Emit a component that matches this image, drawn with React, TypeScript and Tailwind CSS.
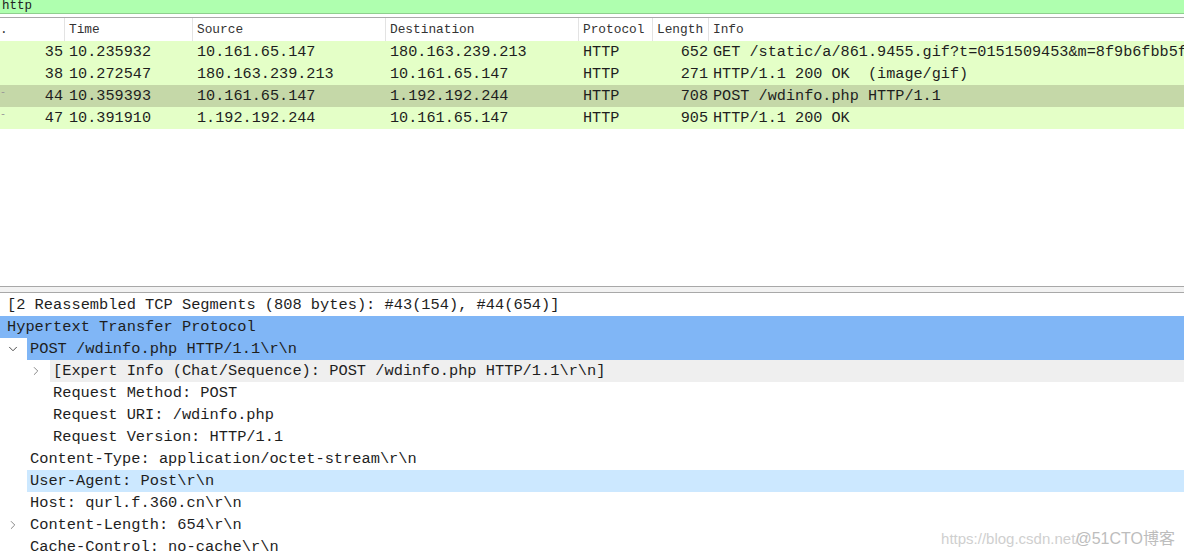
import { ChevronDown, ChevronRight } from 'lucide-react';

const mono = { fontFamily: '"Liberation Mono", "DejaVu Sans Mono", monospace' };

interface Packet {
  no: number;
  time: string;
  src: string;
  dst: string;
  proto: string;
  len: number;
  info: string;
  selected?: boolean;
  mark?: boolean;
}

const packets: Packet[] = [
  { no: 35, time: '10.235932', src: '10.161.65.147', dst: '180.163.239.213', proto: 'HTTP', len: 652, info: 'GET /static/a/861.9455.gif?t=0151509453&m=8f9b6fbb5f9d' },
  { no: 38, time: '10.272547', src: '180.163.239.213', dst: '10.161.65.147', proto: 'HTTP', len: 271, info: 'HTTP/1.1 200 OK  (image/gif)' },
  { no: 44, time: '10.359393', src: '10.161.65.147', dst: '1.192.192.244', proto: 'HTTP', len: 708, info: 'POST /wdinfo.php HTTP/1.1', selected: true, mark: true },
  { no: 47, time: '10.391910', src: '1.192.192.244', dst: '10.161.65.147', proto: 'HTTP', len: 905, info: 'HTTP/1.1 200 OK', mark: true },
];

type Tree = { text: string; level: number; open?: boolean; closed?: boolean; bg?: string };

const tree: Tree[] = [
  { text: '[2 Reassembled TCP Segments (808 bytes): #43(154), #44(654)]', level: 0 },
  { text: 'Hypertext Transfer Protocol', level: 0, bg: 'bg-[#80b6f6]' },
  { text: 'POST /wdinfo.php HTTP/1.1\\r\\n', level: 1, open: true, bg: 'bg-[#80b6f6]' },
  { text: '[Expert Info (Chat/Sequence): POST /wdinfo.php HTTP/1.1\\r\\n]', level: 2, closed: true, bg: 'bg-[#efefef]' },
  { text: 'Request Method: POST', level: 2 },
  { text: 'Request URI: /wdinfo.php', level: 2 },
  { text: 'Request Version: HTTP/1.1', level: 2 },
  { text: 'Content-Type: application/octet-stream\\r\\n', level: 1 },
  { text: 'User-Agent: Post\\r\\n', level: 1, bg: 'bg-[#cce8ff]' },
  { text: 'Host: qurl.f.360.cn\\r\\n', level: 1 },
  { text: 'Content-Length: 654\\r\\n', level: 1, closed: true },
  { text: 'Cache-Control: no-cache\\r\\n', level: 1 },
];

const cols = [
  { w: 'w-[65px]', label: '.' },
  { w: 'w-[128px]', label: 'Time' },
  { w: 'w-[193px]', label: 'Source' },
  { w: 'w-[193px]', label: 'Destination' },
  { w: 'w-[74px]', label: 'Protocol' },
  { w: 'w-[56px]', label: 'Length' },
];

export default function App() {
  return (
    <div className="relative w-[1184px] h-[559px] overflow-hidden bg-white text-[#1e1e1e]" style={mono}>
      {/* filter bar */}
      <div className="h-[14px] bg-[#afffaf] border-b border-[#8fcf8f] overflow-hidden">
        <div className="text-[12.5px] leading-[13px] pl-[2px] text-[#222]">http</div>
      </div>
      <div className="h-[3px]" />

      {/* packet list header */}
      <div className="flex h-[24px] border-t border-[#a9a9a9] text-[12.8px] text-[#333] items-center">
        {cols.map((c, i) => (
          <div key={i} className={`${c.w} h-full flex items-center border-r border-[#e3e3e3] ${i === 0 ? 'pl-0' : 'pl-[4px]'}`}>
            {c.label}
          </div>
        ))}
        <div className="flex-1 pl-[4px]">Info</div>
      </div>

      {/* packet rows */}
      {packets.map((p) => (
        <div
          key={p.no}
          className={`flex h-[22px] items-center text-[15.2px] whitespace-pre ${p.selected ? 'bg-[#c5d8a8]' : 'bg-[#e4ffc7]'}`}
        >
          <div className="w-[65px] flex justify-between pr-[2px]">
            <span className="text-[#999] text-[10px]">{p.mark ? '-' : ''}</span>
            <span>{p.no}</span>
          </div>
          <div className="w-[128px] pl-[4px]">{p.time}</div>
          <div className="w-[193px] pl-[4px]">{p.src}</div>
          <div className="w-[193px] pl-[4px]">{p.dst}</div>
          <div className="w-[74px] pl-[4px]">{p.proto}</div>
          <div className="w-[56px] text-right pr-[1px]">{p.len}</div>
          <div className="flex-1 pl-[4px] overflow-hidden">{p.info}</div>
        </div>
      ))}

      <div className="h-[157px]" />

      {/* splitter */}
      <div className="h-[7px] border-y border-[#a8a8a8] bg-[#f2f2f2]" />
      <div className="h-[1px]" />

      {/* details tree */}
      {tree.map((t, i) => {
        const indent = t.level === 0 ? 4 : t.level === 1 ? 27 : 50;
        return (
          <div key={i} className="flex h-[22px] text-[15.35px] whitespace-pre">
            <div
              className={`shrink-0 flex items-center justify-end ${t.level === 0 ? (t.bg ?? '') : 'pr-[7px]'}`}
              style={{ width: indent }}
            >
              {t.open && <ChevronDown size={14} strokeWidth={1.5} className="text-[#333]" />}
              {t.closed && <ChevronRight size={14} strokeWidth={1.5} className="text-[#777]" />}
            </div>
            <div className={`flex-1 flex items-center pl-[3px] ${t.bg ?? ''}`}>{t.text}</div>
          </div>
        );
      })}

      {/* watermark */}
      <div
        className="absolute right-[9px] bottom-[8px] text-[15px] text-[#cfcfcf] whitespace-nowrap"
        style={{ fontFamily: '"Liberation Sans", "Noto Sans CJK SC", sans-serif' }}
      >
        https://blog.csdn.net/
        <span className="text-[#bdbdbd] -ml-[4px] text-[16px]">@51CTO博客</span>
      </div>
    </div>
  );
}
